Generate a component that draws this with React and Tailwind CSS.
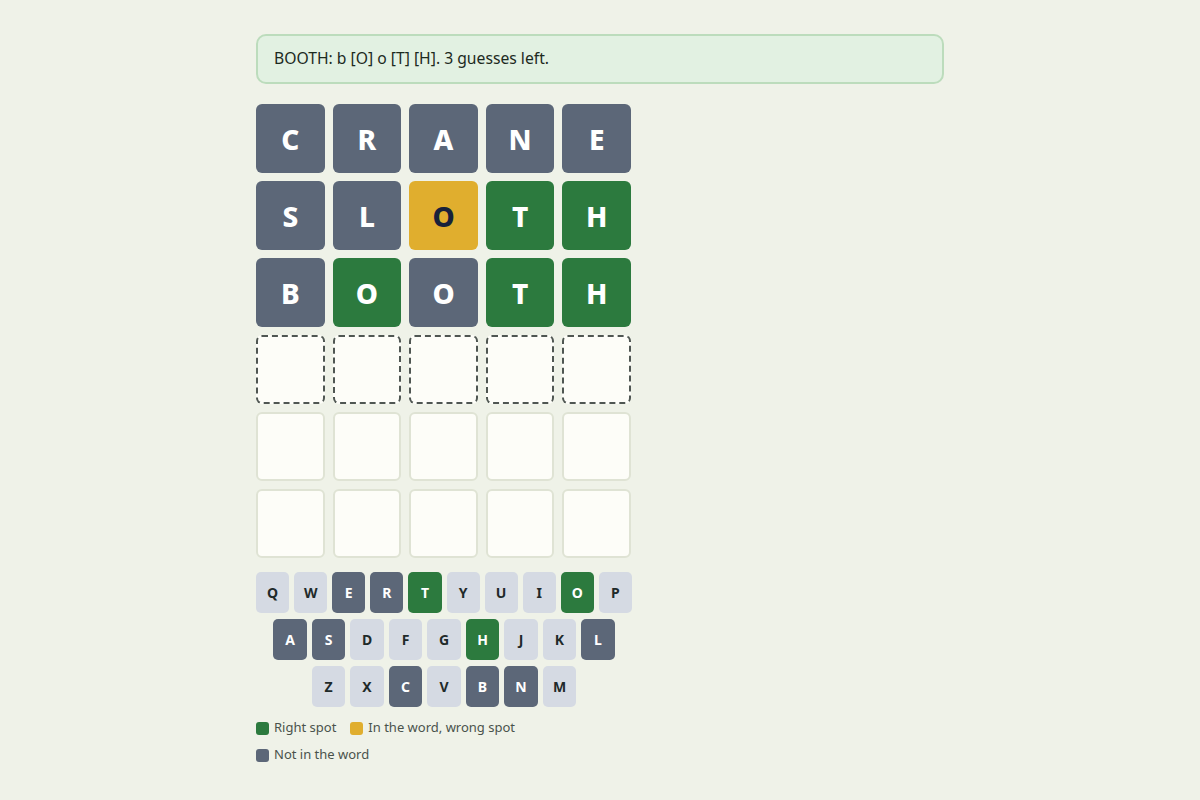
const GRAY = "bg-[#5c6778] text-white";
const GREEN = "bg-[#2c7a3e] text-white";
const YELLOW = "bg-[#e0ae2e] text-[#17213a]";

const rows = [
  [["C", GRAY], ["R", GRAY], ["A", GRAY], ["N", GRAY], ["E", GRAY]],
  [["S", GRAY], ["L", GRAY], ["O", YELLOW], ["T", GREEN], ["H", GREEN]],
  [["B", GRAY], ["O", GREEN], ["O", GRAY], ["T", GREEN], ["H", GREEN]],
];

const keyState = {
  E: "gray", R: "gray", T: "green", O: "green", A: "gray", S: "gray",
  H: "green", L: "gray", C: "gray", B: "gray", N: "gray",
};

const keyRows = ["QWERTYUIOP", "ASDFGHJKL", "ZXCVBNM"];

function Key({ letter }) {
  const s = keyState[letter];
  const color =
    s === "green"
      ? "bg-[#2c7a3e] text-white"
      : s === "gray"
      ? "bg-[#5c6778] text-white"
      : "bg-[#d5dae3] text-[#1f2a2a]";
  return (
    <div className={`w-[33.5px] h-[41px] rounded-[5px] flex items-center justify-center text-[14px] font-bold ${color}`}>
      {letter}
    </div>
  );
}

export default function App() {
  return (
    <div
      className="min-h-[800px] bg-[#eff2e8] pt-[34px]"
      style={{ fontFamily: "'Noto Sans', 'Liberation Sans', sans-serif" }}
    >
      <div className="w-[688px] mx-auto">
        <div className="h-[50px] flex items-center px-[16px] rounded-[10px] border-2 border-[#bcdcbc] bg-[#e2f1e2] text-[15.7px] text-[#1c2a1e]">
          BOOTH: b [O] o [T] [H]. 3 guesses left.
        </div>

        <div className="w-[375px] mt-[20px] grid grid-cols-5 gap-2">
          {rows.map((row, ri) =>
            row.map(([l, c], ci) => (
              <div
                key={`${ri}-${ci}`}
                className={`h-[69px] rounded-[6px] flex items-center justify-center text-[28px] font-extrabold ${c}`}
              >
                {l}
              </div>
            ))
          )}
          {/* current row */}
          {[0, 1, 2, 3, 4].map((i) => (
            <div
              key={`cur-${i}`}
              className="h-[69px] rounded-[6px] border-2 border-dashed border-[#4f5652] bg-[#fdfdf8]"
            />
          ))}
          {Array.from({ length: 10 }).map((_, i) => (
            <div
              key={`empty-${i}`}
              className="h-[69px] rounded-[6px] border-2 border-[#dfe3d4] bg-[#fdfdf8]"
            />
          ))}
        </div>

        <div className="w-[376px] mt-[14px] flex flex-col gap-[6px]">
          {keyRows.map((r) => (
            <div key={r} className="flex justify-center gap-[5px]">
              {r.split("").map((l) => (
                <Key key={l} letter={l} />
              ))}
            </div>
          ))}
        </div>

        <div className="w-[376px] mt-[11px] flex flex-wrap gap-x-[14px] gap-y-[7px] text-[13px] text-[#4a524c]">
          <div className="flex items-center gap-[5px] h-[20px]">
            <span className="w-[13px] h-[13px] rounded-[3px] bg-[#2c7a3e]" />
            Right spot
          </div>
          <div className="flex items-center gap-[5px] h-[20px]">
            <span className="w-[13px] h-[13px] rounded-[3px] bg-[#e0ae2e]" />
            In the word, wrong spot
          </div>
          <div className="flex items-center gap-[5px] h-[20px]">
            <span className="w-[13px] h-[13px] rounded-[3px] bg-[#5c6778]" />
            Not in the word
          </div>
        </div>
      </div>
    </div>
  );
}
